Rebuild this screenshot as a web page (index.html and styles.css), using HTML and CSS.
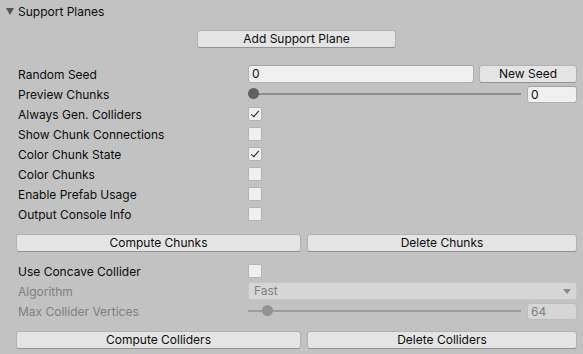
FILE: index.html
```html
<!DOCTYPE html>
<html lang="en">
<head>
  <meta charset="UTF-8">
  <meta name="viewport" content="width=device-width, initial-scale=1.0">
  <title>Support Planes</title>
  <link rel="stylesheet" href="styles.css">
</head>
<body>
  <div class="inspector">
    <div class="foldout">
      <span class="foldout-arrow"></span>
      <span>Support Planes</span>
    </div>

    <div class="center-row">
      <button class="btn btn-add">Add Support Plane</button>
    </div>

    <div class="prop first">
      <label class="prop-label">Random Seed</label>
      <div class="prop-field">
        <div class="text-field grow">0</div>
        <button class="btn btn-seed">New Seed</button>
      </div>
    </div>

    <div class="prop">
      <label class="prop-label">Preview Chunks</label>
      <div class="prop-field">
        <div class="slider"><span class="knob"></span></div>
        <div class="text-field num">0</div>
      </div>
    </div>

    <div class="prop">
      <label class="prop-label">Always Gen. Colliders</label>
      <div class="prop-field"><span class="checkbox checked"></span></div>
    </div>
    <div class="prop">
      <label class="prop-label">Show Chunk Connections</label>
      <div class="prop-field"><span class="checkbox"></span></div>
    </div>
    <div class="prop">
      <label class="prop-label">Color Chunk State</label>
      <div class="prop-field"><span class="checkbox checked"></span></div>
    </div>
    <div class="prop">
      <label class="prop-label">Color Chunks</label>
      <div class="prop-field"><span class="checkbox"></span></div>
    </div>
    <div class="prop">
      <label class="prop-label">Enable Prefab Usage</label>
      <div class="prop-field"><span class="checkbox"></span></div>
    </div>
    <div class="prop">
      <label class="prop-label">Output Console Info</label>
      <div class="prop-field"><span class="checkbox"></span></div>
    </div>

    <div class="button-row">
      <button class="btn btn-half left">Compute Chunks</button>
      <button class="btn btn-half right">Delete Chunks</button>
    </div>

    <div class="prop first-after-buttons">
      <label class="prop-label">Use Concave Collider</label>
      <div class="prop-field"><span class="checkbox"></span></div>
    </div>

    <div class="prop disabled">
      <label class="prop-label">Algorithm</label>
      <div class="prop-field">
        <div class="dropdown">Fast<span class="dropdown-arrow"></span></div>
      </div>
    </div>

    <div class="prop disabled">
      <label class="prop-label">Max Collider Vertices</label>
      <div class="prop-field">
        <div class="slider"><span class="knob knob-64"></span></div>
        <div class="text-field num">64</div>
      </div>
    </div>

    <div class="button-row last">
      <button class="btn btn-half left">Compute Colliders</button>
      <button class="btn btn-half right">Delete Colliders</button>
    </div>
  </div>
</body>
</html>
```

FILE: styles.css
```css
/* Unity light inspector */
body {
  margin: 0;
  padding: 0;
  background-color: #c2c2c2;
  color: #0c0c0c;
  font-family: 'Inter', 'Noto Sans', sans-serif;
  font-size: 12px;
}

.inspector {
  width: 583px;
  height: 354px;
  overflow: hidden;
}

.foldout {
  display: flex;
  align-items: center;
  height: 18px;
  margin-top: 2px;
  padding-left: 6px;
}

.foldout-arrow {
  width: 0;
  height: 0;
  border-left: 4px solid transparent;
  border-right: 4px solid transparent;
  border-top: 7px solid #555;
  margin-right: 4px;
  margin-top: 1px;
}

.center-row {
  display: flex;
  justify-content: center;
  padding-left: 16px;
  padding-right: 6px;
  margin-top: 10px;
}

.btn {
  font-family: inherit;
  font-size: 12px;
  color: #0c0c0c;
  background-color: #e4e4e4;
  border: 1px solid #b2b2b2;
  border-bottom-color: #939393;
  border-radius: 3px;
  height: 18px;
  padding: 0;
  line-height: 16px;
  cursor: pointer;
}

.btn-add {
  width: 199px;
}

.prop {
  display: flex;
  align-items: center;
  height: 18px;
  margin-top: 2px;
  padding-left: 18px;
  padding-right: 6px;
}

.prop.first {
  margin-top: 17px;
}

.prop.first-after-buttons {
  margin-top: 10px;
}

.prop-label {
  width: 230px;
  flex-shrink: 0;
  white-space: nowrap;
}

.prop-field {
  flex: 1;
  display: flex;
  align-items: center;
  height: 18px;
}

.disabled .prop-label {
  color: #7f7f7f;
}

.text-field {
  height: 16px;
  line-height: 16px;
  background-color: #f0f0f0;
  border: 1px solid #b0b0b0;
  border-top-color: #a2a2a2;
  border-radius: 3px;
  padding-left: 3px;
  box-sizing: content-box;
}

.text-field.grow {
  flex: 1;
}

.btn-seed {
  width: 98px;
  margin-left: 5px;
}

.text-field.num {
  width: 45px;
  margin-left: 6px;
  height: 15px;
  line-height: 15px;
}

.disabled .text-field {
  color: #7f7f7f;
  background-color: #d6d6d6;
  border-color: #bdbdbd;
}

.slider {
  flex: 1;
  position: relative;
  height: 2px;
  background-color: #8f8f8f;
}

.knob {
  position: absolute;
  left: 0;
  top: -5px;
  width: 11px;
  height: 11px;
  border-radius: 50%;
  background-color: #616161;
}

.knob-64 {
  left: 14px;
}

.disabled .slider {
  background-color: #9c9c9c;
}

.disabled .knob {
  background-color: #929292;
}

.checkbox {
  position: relative;
  width: 12px;
  height: 12px;
  background-color: #f0f0f0;
  border: 1px solid #b3b3b3;
  border-radius: 2px;
}

.checkbox.checked::after {
  content: "";
  position: absolute;
  left: 4px;
  top: 1px;
  width: 3px;
  height: 7px;
  border-right: 1.5px solid #1a1a1a;
  border-bottom: 1.5px solid #1a1a1a;
  transform: rotate(40deg);
}

.button-row {
  display: flex;
  gap: 6px;
  padding-left: 16px;
  padding-right: 6px;
  margin-top: 11px;
}

.button-row.last {
  margin-top: 11px;
}

.btn-half.left {
  width: 285px;
}

.btn-half.right {
  flex: 1;
}

.dropdown {
  flex: 1;
  position: relative;
  height: 16px;
  line-height: 16px;
  padding-left: 5px;
  color: #7f7f7f;
  background-color: #d6d6d6;
  border: 1px solid #c6c6c6;
  border-radius: 3px;
}

.dropdown-arrow {
  position: absolute;
  right: 5px;
  top: 6px;
  width: 0;
  height: 0;
  border-left: 4px solid transparent;
  border-right: 4px solid transparent;
  border-top: 5px solid #8a8a8a;
}
```
